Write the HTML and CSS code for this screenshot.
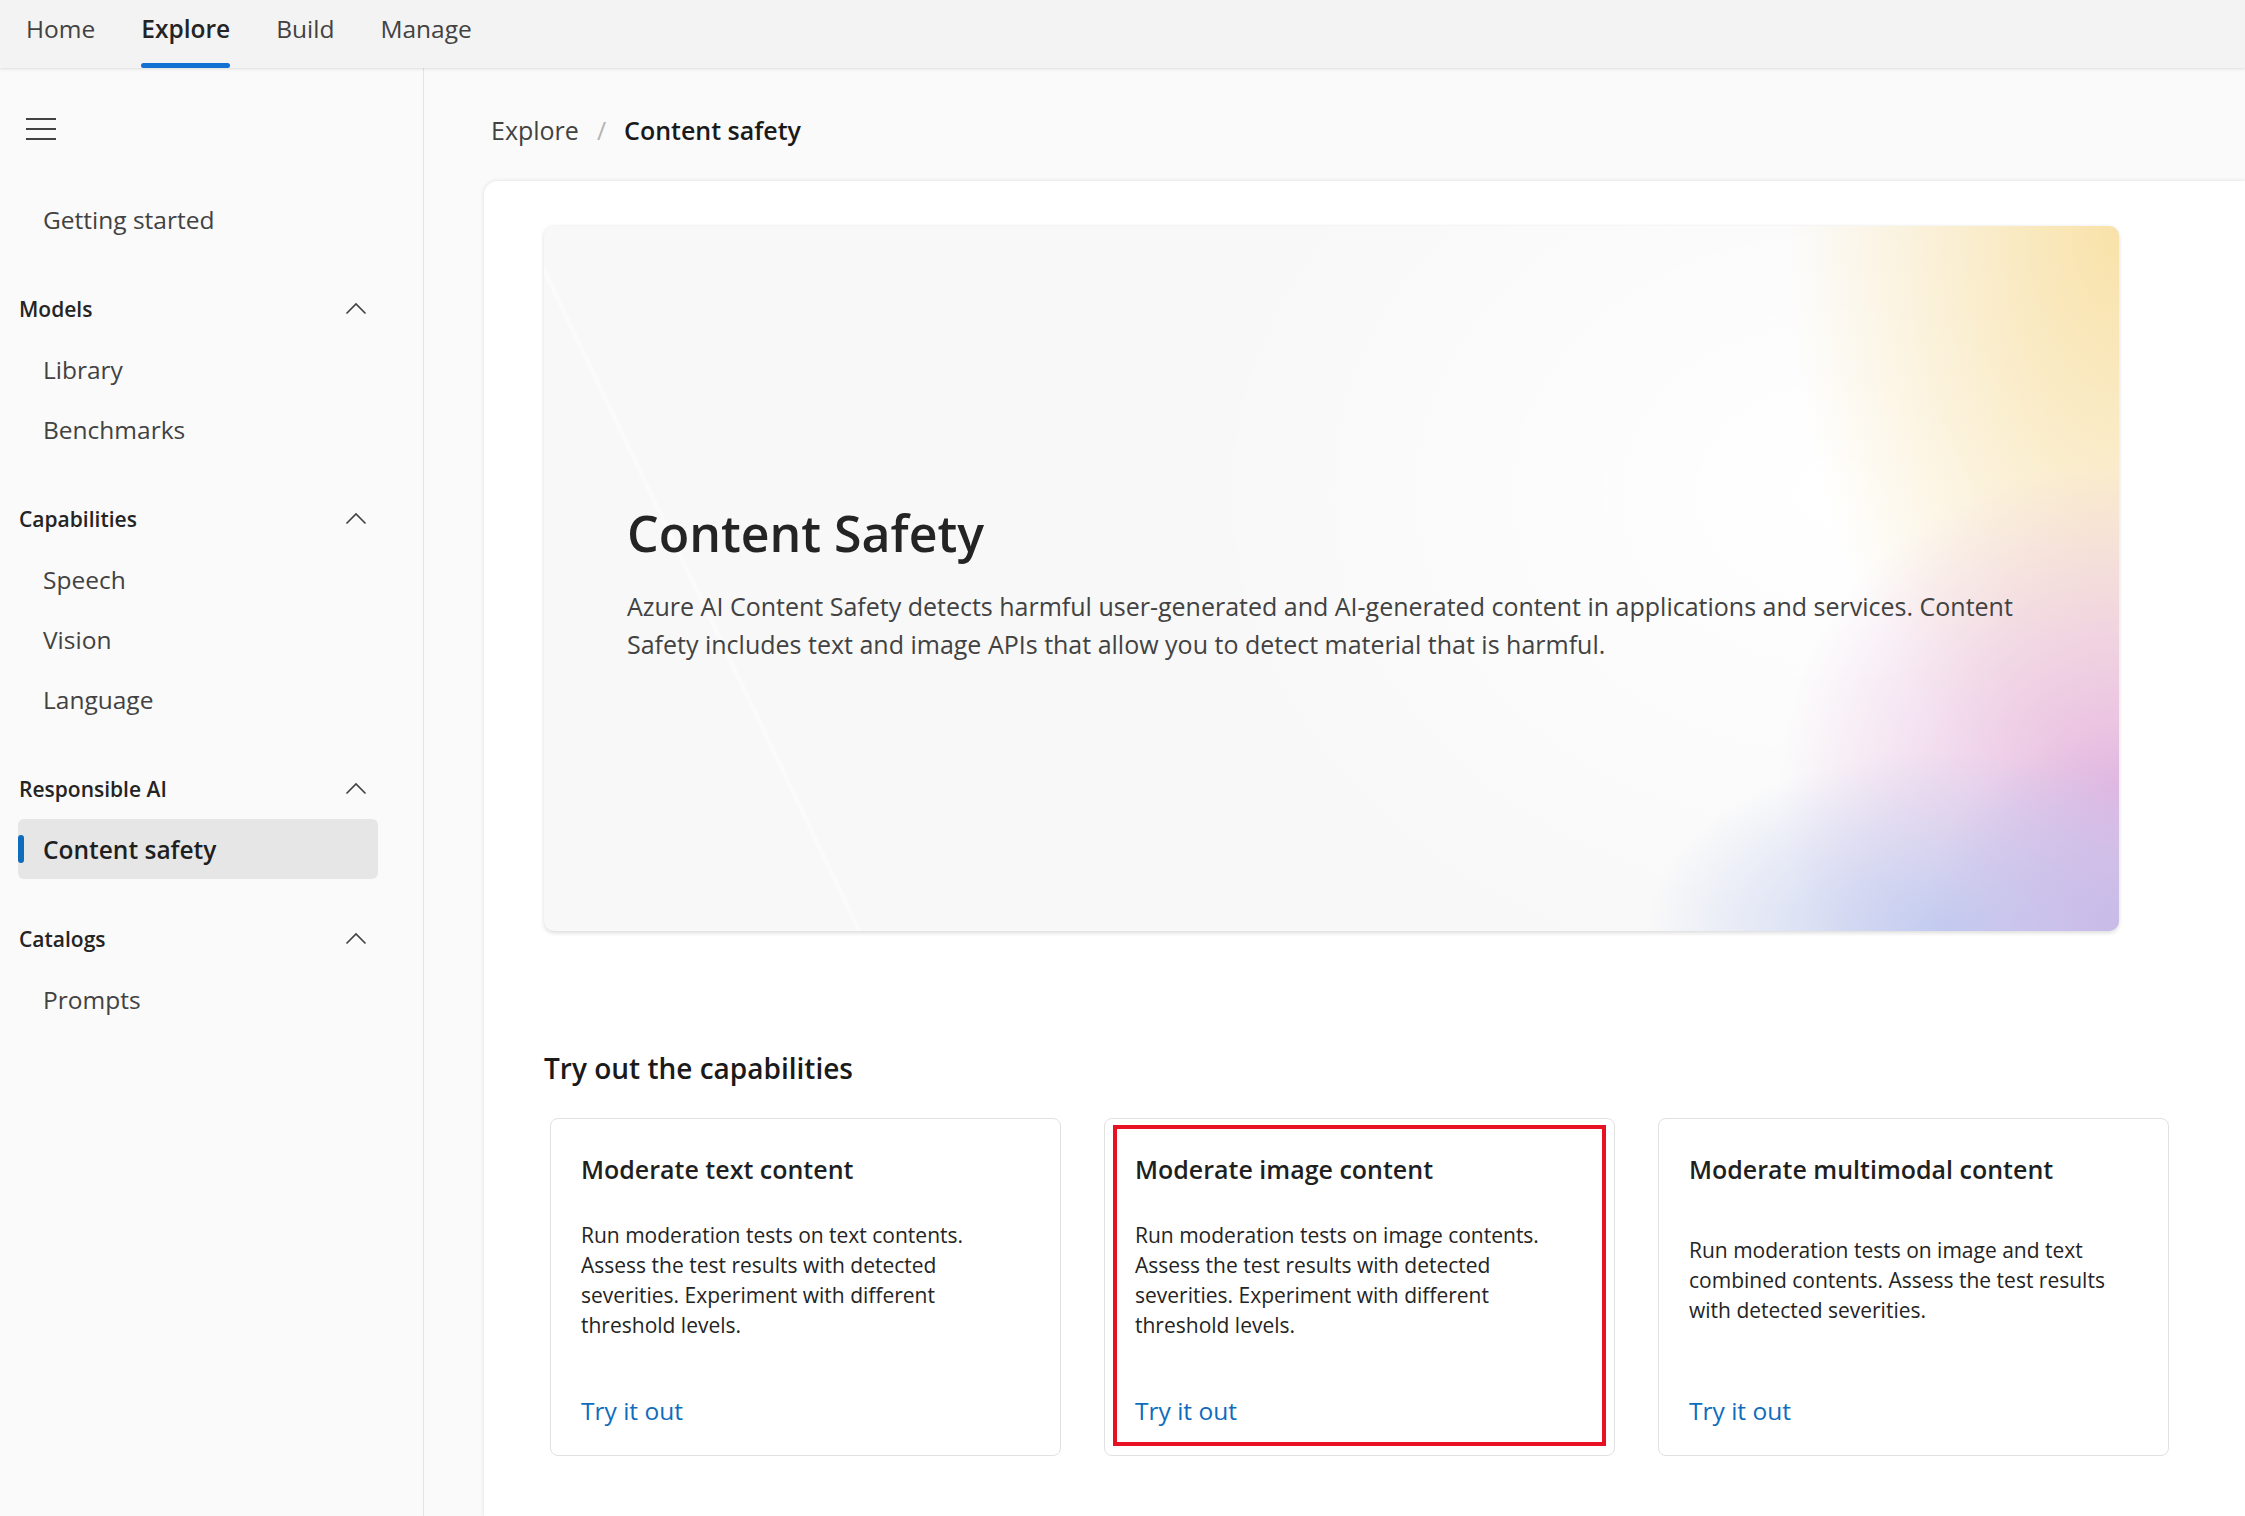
FILE: index.html
```html
<!DOCTYPE html>
<html lang="en">
<head>
<meta charset="utf-8">
<title>Content safety</title>
<link rel="stylesheet" href="styles.css">
</head>
<body>
<header class="topbar">
  <nav class="tabs">
    <a class="tab">Home</a>
    <a class="tab active">Explore</a>
    <a class="tab">Build</a>
    <a class="tab">Manage</a>
  </nav>
</header>
<div class="layout">
  <aside class="sidebar">
    <div class="group">
      <div class="hamburger-row">
        <svg class="hamburger" width="30" height="22" viewBox="0 0 30 22"><path d="M0 1h30M0 11h30M0 21h30" stroke="#424242" stroke-width="2" fill="none"/></svg>
      </div>
    </div>
    <div class="group">
      <div class="item">Getting started</div>
    </div>
    <div class="group">
      <div class="group-head"><span>Models</span><svg class="chev" width="22" height="22" viewBox="0 0 22 22"><path d="M1.5 15.5L11 6l9.5 9.5" stroke="#424242" stroke-width="1.6" fill="none"/></svg></div>
      <div class="item">Library</div>
      <div class="item">Benchmarks</div>
    </div>
    <div class="group">
      <div class="group-head"><span>Capabilities</span><svg class="chev" width="22" height="22" viewBox="0 0 22 22"><path d="M1.5 15.5L11 6l9.5 9.5" stroke="#424242" stroke-width="1.6" fill="none"/></svg></div>
      <div class="item">Speech</div>
      <div class="item">Vision</div>
      <div class="item">Language</div>
    </div>
    <div class="group">
      <div class="group-head"><span>Responsible AI</span><svg class="chev" width="22" height="22" viewBox="0 0 22 22"><path d="M1.5 15.5L11 6l9.5 9.5" stroke="#424242" stroke-width="1.6" fill="none"/></svg></div>
      <div class="item selected">Content safety</div>
    </div>
    <div class="group">
      <div class="group-head"><span>Catalogs</span><svg class="chev" width="22" height="22" viewBox="0 0 22 22"><path d="M1.5 15.5L11 6l9.5 9.5" stroke="#424242" stroke-width="1.6" fill="none"/></svg></div>
      <div class="item">Prompts</div>
    </div>
  </aside>
  <main class="main">
    <div class="breadcrumb">
      <span class="crumb">Explore</span>
      <span class="crumb-sep">/</span>
      <span class="crumb current">Content safety</span>
    </div>
    <section class="panel">
      <div class="hero">
        <h1 class="hero-title">Content Safety</h1>
        <p class="hero-desc">Azure AI Content Safety detects harmful user-generated and AI-generated content in applications and services. Content Safety includes text and image APIs that allow you to detect material that is harmful.</p>
      </div>
      <h2 class="section-title">Try out the capabilities</h2>
      <div class="cards">
        <div class="card">
          <h3 class="card-title">Moderate text content</h3>
          <div class="card-desc"><p>Run moderation tests on text contents. Assess the test results with detected severities. Experiment with different threshold levels.</p></div>
          <a class="card-link">Try it out</a>
        </div>
        <div class="card highlighted">
          <h3 class="card-title">Moderate image content</h3>
          <div class="card-desc"><p>Run moderation tests on image contents. Assess the test results with detected severities. Experiment with different threshold levels.</p></div>
          <a class="card-link">Try it out</a>
          <div class="highlight-frame"></div>
        </div>
        <div class="card">
          <h3 class="card-title">Moderate multimodal content</h3>
          <div class="card-desc"><p>Run moderation tests on image and text combined contents. Assess the test results with detected severities.</p></div>
          <a class="card-link">Try it out</a>
        </div>
      </div>
    </section>
  </main>
</div>
</body>
</html>
```
FILE: styles.css
```css
html, body {
  margin: 0;
  height: 1516px;
  overflow: hidden;
}
body {
  font-family: "Open Sans", "Noto Sans", sans-serif;
  background: #fafafa;
  color: #242424;
}

/* Top bar */
.topbar {
  height: 68px;
  box-sizing: border-box;
  background: #f3f3f3;
  box-shadow: 0 1px 3px rgba(0, 0, 0, 0.12);
  position: relative;
  z-index: 2;
  display: flex;
  padding-left: 26px;
}
.tabs {
  display: flex;
  gap: 46px;
}
.tab {
  position: relative;
  height: 68px;
  line-height: 58px;
  font-size: 24.5px;
  color: #424242;
}
.tab.active {
  font-weight: 600;
  color: #242424;
}
.tab.active::after {
  content: "";
  position: absolute;
  left: 0;
  right: 0;
  bottom: 0;
  height: 5px;
  border-radius: 3px;
  background: #1172d4;
}

/* Layout */
.layout {
  display: flex;
  height: 1448px;
}

/* Sidebar */
.sidebar {
  width: 424px;
  box-sizing: border-box;
  flex: none;
  border-right: 1px solid #e4e4e4;
  background: #fafafa;
  padding: 31px 0 0 18px;
  display: flex;
  flex-direction: column;
  gap: 30px;
}
.group {
  width: 360px;
  display: flex;
  flex-direction: column;
}
.hamburger-row {
  height: 60px;
  display: flex;
  align-items: center;
  padding-left: 8px;
}
.group-head {
  height: 60px;
  display: flex;
  align-items: center;
  justify-content: space-between;
  padding-left: 1px;
  padding-right: 11px;
  font-size: 21px;
  font-weight: 600;
  color: #242424;
}
.chev {
  display: block;
}
.item {
  position: relative;
  height: 60px;
  display: flex;
  align-items: center;
  padding-left: 25px;
  font-size: 24.5px;
  color: #424242;
  border-radius: 6px;
}
.item.selected {
  background: #e6e6e6;
  font-weight: 600;
  color: #1f1f1f;
}
.item.selected::before {
  content: "";
  position: absolute;
  left: 0;
  top: 16px;
  width: 6px;
  height: 28px;
  border-radius: 3px;
  background: #0f6cbd;
}

/* Main */
.main {
  flex: 1;
  min-width: 0;
  display: flex;
  flex-direction: column;
  padding-left: 60px;
}
.breadcrumb {
  margin-top: 42px;
  height: 40px;
  display: flex;
  align-items: center;
  gap: 18px;
  padding-left: 7px;
  font-size: 25px;
}
.crumb {
  color: #424242;
}
.crumb-sep {
  color: #b4b4b4;
}
.crumb.current {
  color: #1a1a1a;
  font-weight: 600;
}

.panel {
  flex: 1;
  margin-top: 31px;
  background: #ffffff;
  border-radius: 14px 0 0 0;
  box-shadow: 0 0 4px rgba(0, 0, 0, 0.12);
  padding: 45px 0 0 60px;
}

.hero {
  width: 1575px;
  height: 705px;
  box-sizing: border-box;
  border-radius: 10px;
  box-shadow: 0 1.5px 4px rgba(0, 0, 0, 0.14);
  padding: 9px 0 0 83px;
  display: flex;
  flex-direction: column;
  justify-content: center;
  background:
    linear-gradient(64.5deg, rgba(255,255,255,0) 16.3%, rgba(255,255,255,0.55) 16.5%, rgba(255,255,255,0) 16.7%),
    radial-gradient(ellipse 200px 200px at 100% 100%, rgba(198,184,232,0.9), rgba(198,184,232,0) 100%),
    radial-gradient(ellipse 300px 180px at 89% 100%, rgba(194,204,240,1), rgba(194,204,240,0) 100%),
    radial-gradient(ellipse 340px 330px at 100% 80%, rgba(230,180,222,0.95), rgba(230,180,222,0) 100%),
    radial-gradient(ellipse 330px 600px at 100% 0%, rgba(249,226,169,1), rgba(249,226,169,0) 100%),
    radial-gradient(ellipse 650px 520px at 82% 38%, #ffffff, rgba(255,255,255,0) 100%),
    #f8f8f8;
}
.hero-title {
  margin: 0;
  font-size: 50px;
  line-height: 60px;
  font-weight: 600;
  color: #242424;
}
.hero-desc {
  margin: 24px 0 0;
  max-width: 1420px;
  font-size: 25px;
  line-height: 38px;
  color: #424242;
}

.section-title {
  margin: 117px 0 30px;
  font-size: 28px;
  line-height: 40px;
  font-weight: 600;
  color: #1a1a1a;
}

.cards {
  margin-left: 6px;
  display: grid;
  grid-template-columns: repeat(3, 511px);
  column-gap: 43px;
}
.card {
  position: relative;
  height: 338px;
  box-sizing: border-box;
  border: 1px solid #e1e1e1;
  border-radius: 8px;
  background: #ffffff;
  padding: 33px 30px 27px 30px;
  display: flex;
  flex-direction: column;
}
.card-title {
  margin: 0;
  font-size: 25px;
  line-height: 34px;
  font-weight: 600;
  color: #1f1f1f;
}
.card-desc {
  height: 188px;
  display: flex;
  align-items: center;
}
.card-desc p {
  margin: 0;
  max-width: 440px;
  font-size: 21px;
  line-height: 30px;
  color: #242424;
}
.card-link {
  margin-top: 20px;
  font-size: 24.5px;
  line-height: 34px;
  color: #0f6cbd;
}
.highlight-frame {
  position: absolute;
  top: 6px;
  left: 8px;
  right: 8px;
  bottom: 9px;
  border: 4px solid #e81123;
  pointer-events: none;
}
```
